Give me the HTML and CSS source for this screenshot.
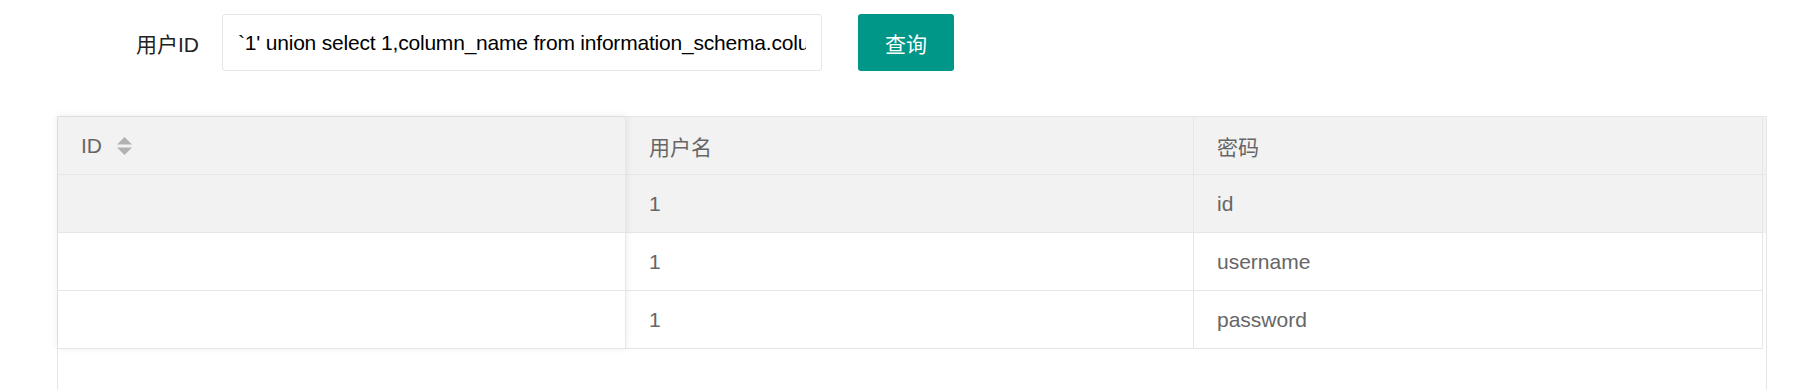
FILE: index.html
```html
<!DOCTYPE html>
<html lang="zh-CN">
<head>
<meta charset="utf-8">
<title>查询</title>
<link rel="stylesheet" href="styles.css">
</head>
<body>
<form class="query-form">
  <label class="form-label" for="uid">用户ID</label>
  <input class="form-input" id="uid" type="text" value="`1' union select 1,column_name from information_schema.columns where table_name='users'#">
  <button class="btn" type="button">查询</button>
</form>

<div class="table-box">
  <div class="table-inner">
    <div class="col-fixed">
      <div class="cell head">ID <svg class="sort" width="15" height="18" viewBox="0 0 15 18"><polygon points="0,7.5 7.5,0 15,7.5" fill="#b2b2b2"/><polygon points="0,10.5 15,10.5 7.5,18" fill="#b2b2b2"/></svg></div>
      <div class="cell hover"></div>
      <div class="cell"></div>
      <div class="cell"></div>
    </div>
    <div class="col-main">
      <div class="row head-row">
        <div class="cell head c2">用户名</div>
        <div class="cell head c3">密码</div>
        <div class="patch"></div>
      </div>
      <div class="row hover">
        <div class="cell c2">1</div>
        <div class="cell c3">id</div>
      </div>
      <div class="row">
        <div class="cell c2">1</div>
        <div class="cell c3">username</div>
      </div>
      <div class="row">
        <div class="cell c2">1</div>
        <div class="cell c3">password</div>
      </div>
    </div>
  </div>
</div>
</body>
</html>
```

FILE: styles.css
```css
* { box-sizing: border-box; }
html, body { margin: 0; padding: 0; background: #fff; }
body {
  font-family: "Liberation Sans", Arial, "Noto Sans CJK SC", sans-serif;
  font-size: 21px;
  color: #333;
  overflow: hidden;
}
.query-form {
  display: flex;
  align-items: center;
  margin: 14px 0 0 0;
  height: 57px;
}
.form-label {
  width: 222px;
  padding-right: 23px;
  text-align: right;
  color: #222;
  font-size: 21px;
}
.form-input {
  width: 600px;
  height: 57px;
  border: 1px solid #e6e6e6;
  border-radius: 3px;
  padding: 0 15px;
  font-family: "Liberation Sans", Arial, "Noto Sans CJK SC", sans-serif;
  font-size: 21px;
  letter-spacing: -0.2px;
  color: #000;
  background: #fff;
  outline: none;
}
.btn {
  margin-left: 36px;
  width: 96px;
  height: 57px;
  border: none;
  border-radius: 3px;
  background: #009688;
  color: #fff;
  font-family: "Liberation Sans", Arial, "Noto Sans CJK SC", sans-serif;
  font-size: 21px;
  padding: 0;
}
.table-box {
  margin: 45px 0 0 57px;
  width: 1710px;
  height: 300px;
  border: 1px solid #e6e6e6;
  background: #fff;
}
.table-inner {
  display: flex;
  align-items: flex-start;
}
.col-fixed {
  width: 568px;
  flex: none;
  position: relative;
  z-index: 1;
  background: #fff;
  box-shadow: 0 -1px 8px rgba(0,0,0,.08);
}
.col-main {
  flex: 1;
}
.row {
  display: flex;
}
.cell {
  height: 58px;
  display: flex;
  align-items: center;
  padding-left: 23px;
  border-bottom: 1px solid #e6e6e6;
  border-right: 1px solid #e6e6e6;
  color: #666;
  font-size: 21px;
  white-space: nowrap;
}
.col-fixed .cell { width: 568px; }
.head { background: #f2f2f2; }
.hover, .row.hover .cell { background: #f2f2f2; }
.c2 { width: 568px; }
.c3 { width: 569px; }
.patch {
  width: 3px;
  height: 58px;
  background: #f2f2f2;
  border-bottom: 1px solid #e6e6e6;
}
.sort {
  margin-left: 15px;
  display: block;
}
```
